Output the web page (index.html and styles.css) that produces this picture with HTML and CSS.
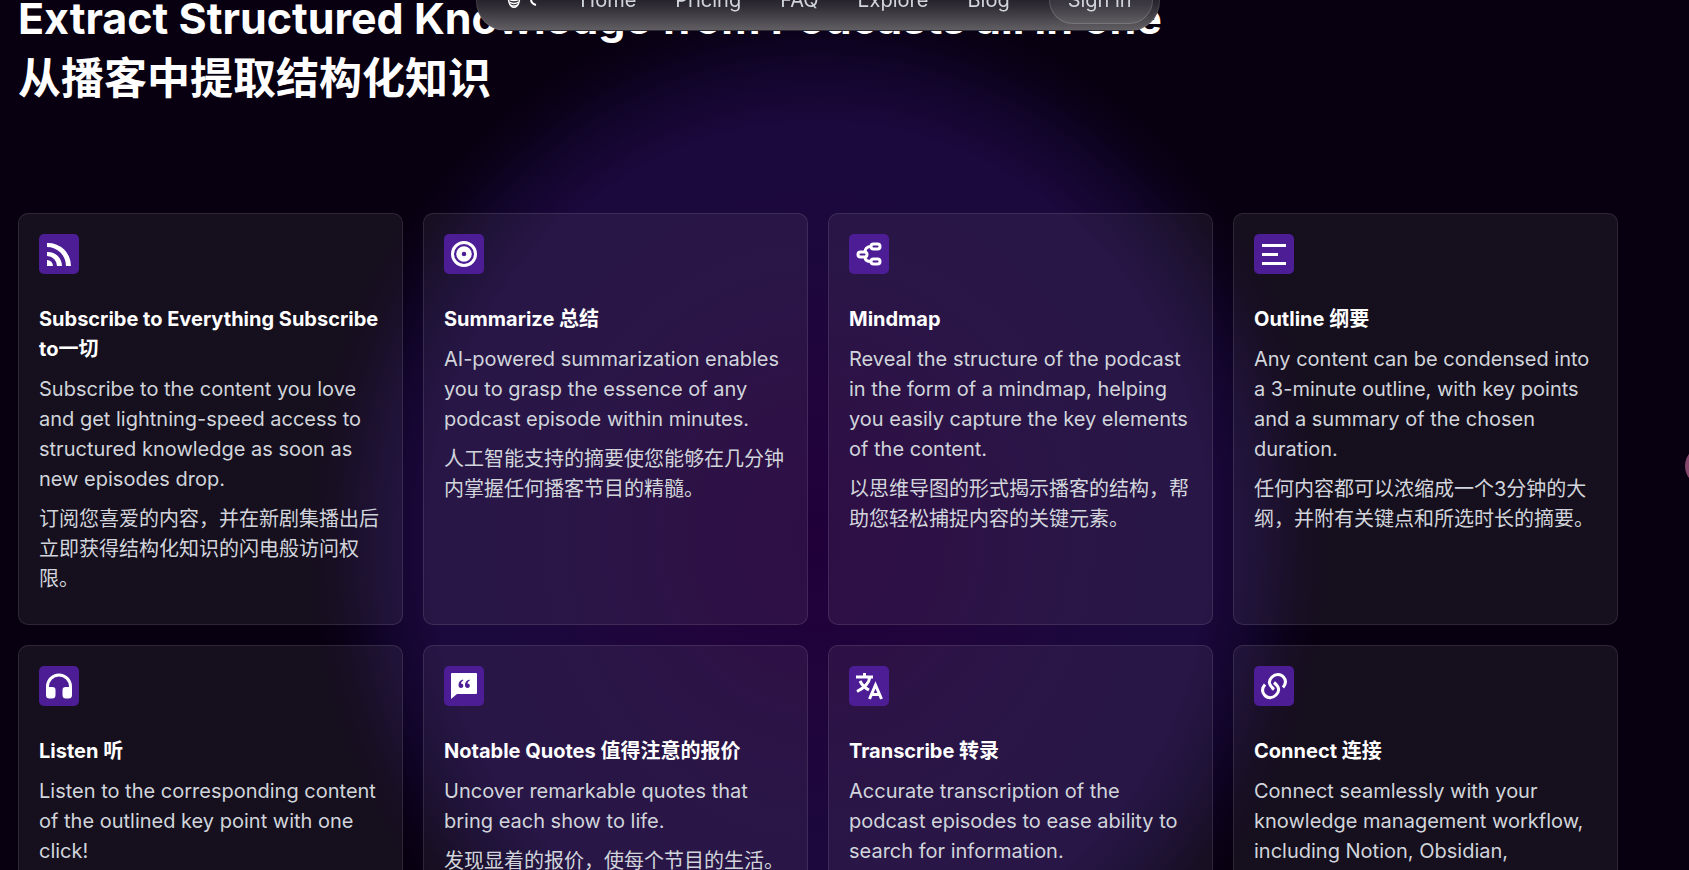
FILE: index.html
```html
<!DOCTYPE html>
<html lang="en">

<head>
  <meta charset="UTF-8">
  <meta name="viewport" content="width=device-width, initial-scale=1.0">
  <title>Extract Structured Knowledge</title>
  <link rel="stylesheet" href="styles.css">
</head>

<body>
  <header class="nav-wrap">
    <nav class="nav">
      <a class="logo" href="#" aria-label="Logo">
        <svg width="36" height="36" viewBox="0 0 36 36" fill="none" stroke="#fff" stroke-width="1.500">
          <path d="M2 10l2 10c2 7 8 7 10 0l2-10z" />
          <path d="M4 17q5 3 10 0M4.500 20q4.500 3 9 0M6 23q3 2 6 0" />
          <path d="M26 17c0 3 1 5 5 6" stroke-width="2" />
        </svg>
      </a>
      <a href="#">Home</a>
      <a href="#">Pricing</a>
      <a href="#">FAQ</a>
      <a href="#">Explore</a>
      <a href="#">Blog</a>
      <button class="sign-in">Sign in</button>
    </nav>
  </header>

  <main class="features">
    <h2 class="heading">Extract Structured Knowledge from Podcasts all in one<br>从播客中提取结构化知识</h2>

    <div class="grid">
      <article class="card">
        <div class="icon">
          <svg viewBox="0 0 24 24" fill="#fff"><path d="M0 1a23 23 0 0 1 24 23h-5A19 19 0 0 0 0 5zM0 10a14 14 0 0 1 15 14h-5A10 10 0 0 0 0 14zM0 18a6 6 0 0 1 6 6H0z" /></svg>
        </div>
        <h3>Subscribe to Everything Subscribe to一切</h3>
        <p>Subscribe to the content you love and get lightning-speed access to structured knowledge as soon as new episodes drop.</p>
        <p>订阅您喜爱的内容，并在新剧集播出后立即获得结构化知识的闪电般访问权限。</p>
      </article>

      <article class="card">
        <div class="icon">
          <svg viewBox="0 0 24 24" fill="none" stroke="#fff"><circle cx="12" cy="12" r="11.500" stroke-width="3" /><circle cx="12" cy="12" r="5" stroke-width="5.500" /></svg>
        </div>
        <h3>Summarize 总结</h3>
        <p>AI-powered summarization enables you to grasp the essence of any podcast episode within minutes.</p>
        <p>人工智能支持的摘要使您能够在几分钟内掌握任何播客节目的精髓。</p>
      </article>

      <article class="card">
        <div class="icon">
          <svg viewBox="0 0 24 24" fill="none" stroke="#fff" stroke-width="3"><rect x="1" y="10" width="9" height="5" rx="2.500" /><rect x="14" y="2" width="9" height="5" rx="2.500" /><rect x="14" y="17" width="9" height="5" rx="2.500" /><path d="M8 10c0-3 2-5.500 6-5.500M8 15c0 3 2 4.500 6 4.500" /></svg>
        </div>
        <h3>Mindmap</h3>
        <p>Reveal the structure of the podcast in the form of a mindmap, helping you easily capture the key elements of the content.</p>
        <p>以思维导图的形式揭示播客的结构，帮助您轻松捕捉内容的关键元素。</p>
      </article>

      <article class="card">
        <div class="icon">
          <svg viewBox="0 0 24 24" fill="#fff"><path d="M0 2h24v3H0zM0 11h16v3H0zM0 20h24v3H0z" /></svg>
        </div>
        <h3>Outline 纲要</h3>
        <p>Any content can be condensed into a 3-minute outline, with key points and a summary of the chosen duration.</p>
        <p>任何内容都可以浓缩成一个3分钟的大纲，并附有关键点和所选时长的摘要。</p>
      </article>

      <article class="card">
        <div class="icon">
          <svg viewBox="0 0 24 24" fill="#fff"><path d="M-1 12.500a13 13 0 0 1 26 0V21a3.500 3.500 0 0 1-3.500 3.500h-2.500A3.500 3.500 0 0 1 15.500 21v-5a3 3 0 0 1 3-3H22v-.5a10 10 0 0 0-20 0v.5h3.500a3 3 0 0 1 3 3v5A3.500 3.500 0 0 1 5 24.500H2.500A3.500 3.500 0 0 1-1 21z" /></svg>
        </div>
        <h3>Listen 听</h3>
        <p>Listen to the corresponding content of the outlined key point with one click!</p>
        <p>只需单击即可收听所概述的关键点的相应内容！</p>
      </article>

      <article class="card">
        <div class="icon">
          <svg viewBox="0 0 24 24"><path fill="#fff" d="M0-1h24a1 1 0 0 1 1 1v19a1 1 0 0 1-1 1H5l-6 5V0a1 1 0 0 1 1-1z" /><path fill="#4c1d95" d="M11 5.500C8.500 6 6.500 8 6.500 11c0 1.800 1 3 2.500 3 1.300 0 2.300-1 2.300-2.300S10.300 9.500 9 9.500c.2-1.300 1-2.400 2.300-3zM17.500 5.500c-2.500.5-4.500 2.500-4.500 5.500 0 1.800 1 3 2.500 3 1.300 0 2.300-1 2.300-2.300s-1-2.200-2.300-2.200c.2-1.300 1-2.400 2.300-3z" /></svg>
        </div>
        <h3>Notable Quotes 值得注意的报价</h3>
        <p>Uncover remarkable quotes that bring each show to life.</p>
        <p>发现显着的报价，使每个节目的生活。</p>
      </article>

      <article class="card">
        <div class="icon">
          <svg viewBox="0 0 24 24" fill="none" stroke="#fff" stroke-width="3"><path d="M-1 3h17M7.500-1v4M13 3C12 9 7 14 0 17.500M3 7c2 4 5 7 9 9" /><path d="M12.500 25L18.500 11l6 14M15 20.500h7" /></svg>
        </div>
        <h3>Transcribe 转录</h3>
        <p>Accurate transcription of the podcast episodes to ease ability to search for information.</p>
        <p>准确转录播客节目，便于搜索信息。</p>
      </article>

      <article class="card">
        <div class="icon">
          <svg viewBox="0 0 24 24" fill="none" stroke="#fff" stroke-width="3"><path d="M21 13.500C24 10 24 6 21.500 3 18.500-.5 13.500-.5 10 3 6 7 6.500 11 12 15.500" /><path d="M3 10.500C0 14 0 18 2.500 21c3 3.500 8 3.500 11.500 0 4-4 3.500-8-2-12.500" /></svg>
        </div>
        <h3>Connect 连接</h3>
        <p>Connect seamlessly with your knowledge management workflow, including Notion, Obsidian, Readwise and more.</p>
        <p>与您的知识管理工作流程无缝连接。</p>
      </article>
    </div>
  </main>

  <button class="side-button" aria-label="Open panel"></button>
</body>

</html>
```
FILE: styles.css
```css
* {
  box-sizing: border-box;
}

body {
  margin: 0;
  /* room for the side button */
  padding-right: 53px;
  height: 100vh;
  overflow: hidden;
  font-family: 'Inter', 'Noto Sans CJK SC', sans-serif;
  font-size: 20px;
  line-height: 30px;
  color: #fff;
  background-color: #080010;
  background-image: radial-gradient(ellipse 510px 550px at calc(50% - 26px) 540px, #21003a 0%, #20043b 28%, #1c083c 55%, #1b083c 76%, rgba(25, 8, 62, 0.6) 86%, rgba(22, 6, 58, 0.2) 94%, rgba(20, 4, 50, 0) 100%);
}

.nav-wrap {
  position: fixed;
  top: -31px;
  left: 0;
  right: 53px;
  display: flex;
  justify-content: center;
}

.nav {
  display: flex;
  align-items: center;
  gap: 39px;
  padding: 6px 6px 6px 28px;
  border-radius: 30px;
  border: 1px solid rgba(255, 255, 255, 0.1);
  background: linear-gradient(#15121b 30%, #2f2c35 60%, #615e63 100%);
}

.nav a {
  color: #d1d5db;
  text-decoration: none;
}

.nav .logo {
  display: flex;
}

.sign-in {
  padding: 8px 20px 8px 18px;
  font: inherit;
  color: #d1d5db;
  border: 1px solid rgba(255, 255, 255, 0.15);
  border-radius: 25px;
  background-color: rgba(255, 255, 255, 0.08);
}

.features {
  max-width: 1636px;
  margin: -12px auto 0;
  padding: 0 18px;
}

.heading {
  margin: 0 0 105px;
  font-size: 43px;
  line-height: 60px;
  font-weight: 700;
}

.grid {
  display: grid;
  grid-template-columns: repeat(4, 1fr);
  gap: 20px;
}

.card {
  padding: 20px;
  border: 1px solid rgba(255, 255, 255, 0.1);
  border-radius: 10px;
  background-color: rgba(255, 255, 255, 0.06);
}

.icon {
  display: flex;
  align-items: center;
  justify-content: center;
  width: 40px;
  height: 40px;
  margin-bottom: 30px;
  border-radius: 5px;
  background-color: #4c1d95;
}

.icon svg {
  width: 24px;
  height: 24px;
  overflow: visible;
}

.card h3 {
  margin: 0 0 10px;
  font-size: 20px;
  font-weight: 700;
}

.card p {
  margin: 0 0 10px;
  color: #d1d5db;
}

.side-button {
  position: fixed;
  top: 446px;
  right: -36px;
  width: 40px;
  height: 40px;
  border: none;
  border-radius: 50%;
  background-color: #85476b;
}
```
